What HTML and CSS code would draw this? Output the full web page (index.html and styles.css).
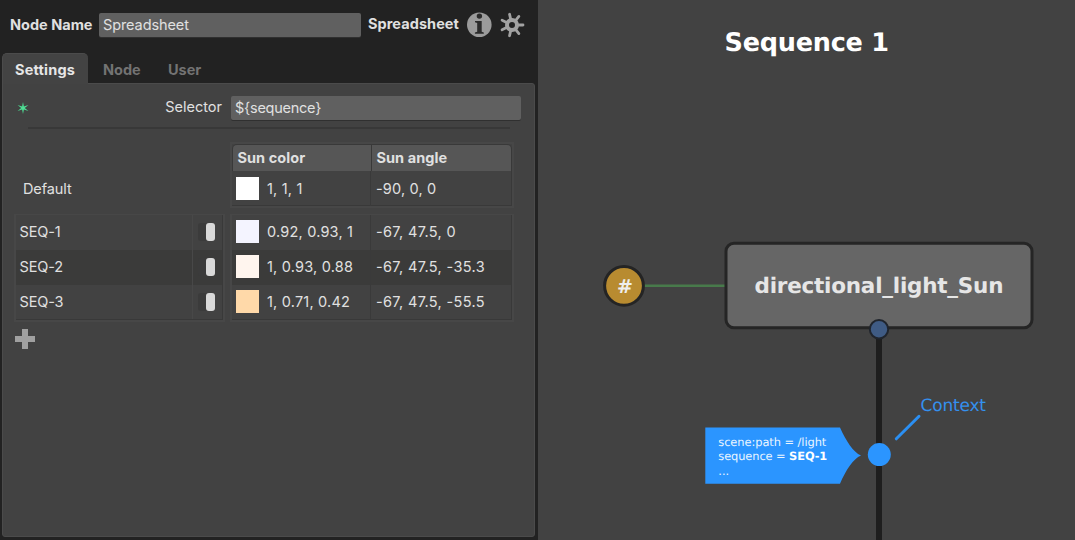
FILE: index.html
```html
<!DOCTYPE html>
<html lang="en">
<head>
<meta charset="utf-8">
<title>Spreadsheet node</title>
<link rel="stylesheet" href="styles.css">
</head>
<body>
<main class="app">
  <section class="editor">
    <header class="node-header">
      <span class="node-label">Node Name</span>
      <div class="field name-field">Spreadsheet</div>
      <span class="node-type">Spreadsheet</span>
      <svg class="info-icon" width="26" height="26" viewBox="0 0 26 26">
        <circle cx="13.3" cy="12.7" r="12.3" fill="#9b9b9b"/>
        <circle cx="13.4" cy="4.1" r="2.7" fill="#2b2b2b"/>
        <path d="M9 9H15.7V19.8L17.8 20.5V21.8H8.9V20.5L11.2 19.8V11L9 10.3Z" fill="#2b2b2b"/>
      </svg>
      <svg class="gear-icon" width="26" height="26" viewBox="-13 -13 26 26">
        <g fill="none" stroke="#a2a2a2">
          <circle r="5" stroke-width="4"/>
          <g stroke-width="2.8" stroke-linecap="round">
            <path d="M6 0H11"/>
            <path d="M6 0H11" transform="rotate(51.43)"/>
            <path d="M6 0H11" transform="rotate(102.86)"/>
            <path d="M6 0H11" transform="rotate(154.29)"/>
            <path d="M6 0H11" transform="rotate(205.71)"/>
            <path d="M6 0H11" transform="rotate(257.14)"/>
            <path d="M6 0H11" transform="rotate(308.57)"/>
          </g>
        </g>
      </svg>
    </header>
    <nav class="tabs">
      <span class="tab tab-active">Settings</span>
      <span class="tab">Node</span>
      <span class="tab">User</span>
    </nav>
    <div class="panel">
      <div class="selector-row">
        <svg class="star" width="12" height="12" viewBox="-6 -6 12 12">
          <path fill="#4ede94" d="M0 -6L.9 -1.6L5.4 -3L1.8 0L5.4 3L.9 1.6L0 6L-.9 1.6L-5.4 3L-1.8 0L-5.4 -3L-.9 -1.6Z"/>
        </svg>
        <span class="selector-label">Selector</span>
        <div class="field selector-field">${sequence}</div>
      </div>
      <div class="separator"></div>
      <div class="default-row">
        <span class="default-label">Default</span>
        <div class="grid values default-grid">
          <div class="grid-head"><span>Sun color</span><span>Sun angle</span></div>
          <div class="grid-row"><span class="color"><i class="swatch white"></i>1, 1, 1</span><span class="angle">-90, 0, 0</span></div>
        </div>
      </div>
      <div class="sequence-row">
        <div class="grid names">
          <div class="grid-row"><span class="name">SEQ-1</span><span class="toggle-cell"><i class="toggle"></i></span></div>
          <div class="grid-row alt"><span class="name">SEQ-2</span><span class="toggle-cell"><i class="toggle"></i></span></div>
          <div class="grid-row"><span class="name">SEQ-3</span><span class="toggle-cell"><i class="toggle"></i></span></div>
        </div>
        <div class="grid values">
          <div class="grid-row"><span class="color"><i class="swatch cool"></i>0.92, 0.93, 1</span><span class="angle">-67, 47.5, 0</span></div>
          <div class="grid-row alt"><span class="color"><i class="swatch warm"></i>1, 0.93, 0.88</span><span class="angle">-67, 47.5, -35.3</span></div>
          <div class="grid-row"><span class="color"><i class="swatch amber"></i>1, 0.71, 0.42</span><span class="angle">-67, 47.5, -55.5</span></div>
        </div>
      </div>
      <svg class="plus" width="20" height="20" viewBox="0 0 20 20"><path fill="#a0a0a0" d="M7 0H13V7H20V13H13V20H7V13H0V7H7Z"/></svg>
    </div>
  </section>
  <svg class="graph" width="537" height="540" viewBox="538 0 537 540">
    <text class="title" x="724.5" y="50.7" textLength="164.5">Sequence 1</text>
    <path d="M644 285.8H726" stroke="#487a4b" stroke-width="2.6"/>
    <circle cx="624" cy="285.8" r="19.4" fill="#b88b30" stroke="#242424" stroke-width="3"/>
    <text class="hash" x="617" y="293">#</text>
    <path d="M879 329V540" stroke="#1e1e1e" stroke-width="6"/>
    <rect x="726" y="243.3" width="306" height="84.4" rx="8" fill="#666" stroke="#252525" stroke-width="3"/>
    <text class="node-title" x="754.5" y="293" textLength="249">directional_light_Sun</text>
    <circle cx="879" cy="329.2" r="9.2" fill="#3f5b84" stroke="#20252d" stroke-width="2"/>
    <path d="M705.3 427.5H840C846 441 853 452 861 455.6C853 459 846 470 840 483.7H705.3Z" fill="#2b95ff"/>
    <g class="context">
      <text x="718.3" y="445.8" textLength="108">scene:path = /light</text>
      <text x="718.3" y="459.8" textLength="109">sequence = <tspan class="strong">SEQ-1</tspan></text>
      <text x="718.3" y="475">...</text>
    </g>
    <circle cx="879.3" cy="454.6" r="11.5" fill="#2b95ff"/>
    <path d="M896.3 438.8L919 416.3" stroke="#2b8ff2" stroke-width="3" stroke-linecap="round"/>
    <text class="context-title" x="920.5" y="411" textLength="65.5">Context</text>
  </svg>
</main>
</body>
</html>
```

FILE: styles.css
```css
* { box-sizing: border-box; }
body { margin: 0; background: #424242; overflow: hidden; }
.app { display: flex; width: 1075px; height: 540px; }

.editor {
  width: 538px; height: 540px; background: #222;
  display: flex; flex-direction: column;
  font: 14.5px/20px Inter, sans-serif; color: #e0e0e0;
}
.node-header { height: 53px; padding: 12px 0 0 10px; display: flex; align-items: flex-start; font-weight: 700; }
.node-label { width: 89px; padding-top: 3px; white-space: nowrap; }
.field {
  height: 24px; padding: 0 4px; line-height: 24px; font-weight: 400; letter-spacing: -0.25px;
  background: #606060; border-radius: 2px; box-shadow: 0 1px 0 #303030;
}
.name-field { width: 262px; margin: 1px 7px 0 0; letter-spacing: -0.1px; }
.node-type { width: 98px; padding-top: 2px; letter-spacing: 0.06px; }
.gear-icon { margin-left: 7px; }

.tabs { height: 30px; display: flex; padding-left: 2px; color: #737373; font-weight: 700; line-height: 33px; }
.tab { width: 65px; padding-left: 15px; }
.tab-active { width: 86px; padding-left: 12px; background: #434343; color: #e6e6e6; border: solid #4b4b4b; border-width: 1px 0 0 1px; border-radius: 5px 5px 0 0; line-height: 31px; height: 31px; position: relative; letter-spacing: 0.2px; }

.panel {
  width: 533px; height: 454px; margin-left: 2px;
  background: #424242; border: 1px solid #4b4b4b; border-radius: 0 3px 3px 3px;
  display: flex; flex-direction: column;
}
.selector-row { height: 43px; padding-top: 12px; display: flex; align-items: flex-start; }
.star { margin: 6px 0 0 14px; }
.selector-label { width: 193px; padding-top: 1px; text-align: right; }
.selector-field { width: 290px; margin-left: 9px; }
.separator { height: 2px; width: 482px; margin-left: 25px; background: #383838; }
.default-row { display: flex; height: 65px; margin-top: 13px; padding-left: 20px; }
.default-label { width: 207px; padding-top: 37px; letter-spacing: -0.1px; }

.grid { border: 2px solid #474747; }
.values { width: 284px; }
.names { width: 211px; }
.default-grid { height: 66px; }
.grid-head { display: grid; grid-template-columns: 138px 1fr; height: 27px; padding: 1px; background: #393939; border-radius: 5px 5px 0 0; gap: 1px; font-weight: 700; line-height: 26px; letter-spacing: 0.05px; }
.grid-head span { background: #565656; padding-left: 4.5px; }
.grid-head span:first-child { border-radius: 4px 0 0 0; }
.grid-head span:last-child { border-radius: 0 4px 0 0; }
.grid-row { height: 35px; display: grid; line-height: 35px; border-right: 1px solid #393939; }
.values .grid-row { grid-template-columns: 139px 1fr; }
.names .grid-row { grid-template-columns: 177px 1fr; }
.alt { background: #3b3b3a; }
.color { display: flex; align-items: center; gap: 8px; padding-left: 4px; border-right: 1px solid #3a3a3a; letter-spacing: 0.2px; }
.angle { padding-left: 5px; letter-spacing: 0.35px; }
.default-grid .angle { letter-spacing: 0.15px; }
.swatch { width: 23px; height: 23px; }
.white { background: #fff; }
.cool { background: #f4f4ff; }
.warm { background: #fff5ee; }
.amber { background: #ffd9a9; }
.sequence-row { display: flex; gap: 5px; height: 110px; margin: 7px 0 0 11px; }
.sequence-row .grid { border-width: 1px 2px 2px; height: 108px; }
.sequence-row .grid-row { line-height: 33px; }
.sequence-row .color, .toggle-cell { padding-bottom: 2px; }
.sequence-row .values .grid-row:last-child, .names .grid-row:last-child, .default-grid .grid-row { border-bottom: 1px solid #393939; }
.sequence-row .grid-row:last-child .color, .grid-row:last-child .toggle-cell { padding-bottom: 1px; }
.name { padding-left: 3.5px; border-right: 1px solid #484848; letter-spacing: -0.15px; }
.toggle-cell { display: flex; align-items: center; padding-left: 5px; }
.toggle { display: flex; justify-content: flex-end; width: 17px; height: 18px; background: #3b3b3b; border-radius: 3px; }
.toggle::after { content: ""; width: 9px; background: #d9d9d9; border-radius: 3px; }
.plus { margin: 5px 0 0 12px; }

.graph { flex: none; background: #424242; font-family: "DejaVu Sans", sans-serif; text-rendering: geometricPrecision; }
.title { font-size: 25.5px; font-weight: 700; fill: #fff; }
.node-title { font-size: 21.5px; font-weight: 700; fill: #e6e6e6; }
.hash { font-size: 19px; font-weight: 700; fill: #eee; }
.context { font-size: 11.4px; fill: #eaf5ff; }
.strong { font-weight: 700; fill: #fff; }
.context-title { font-size: 17px; fill: #3490ee; }
```
